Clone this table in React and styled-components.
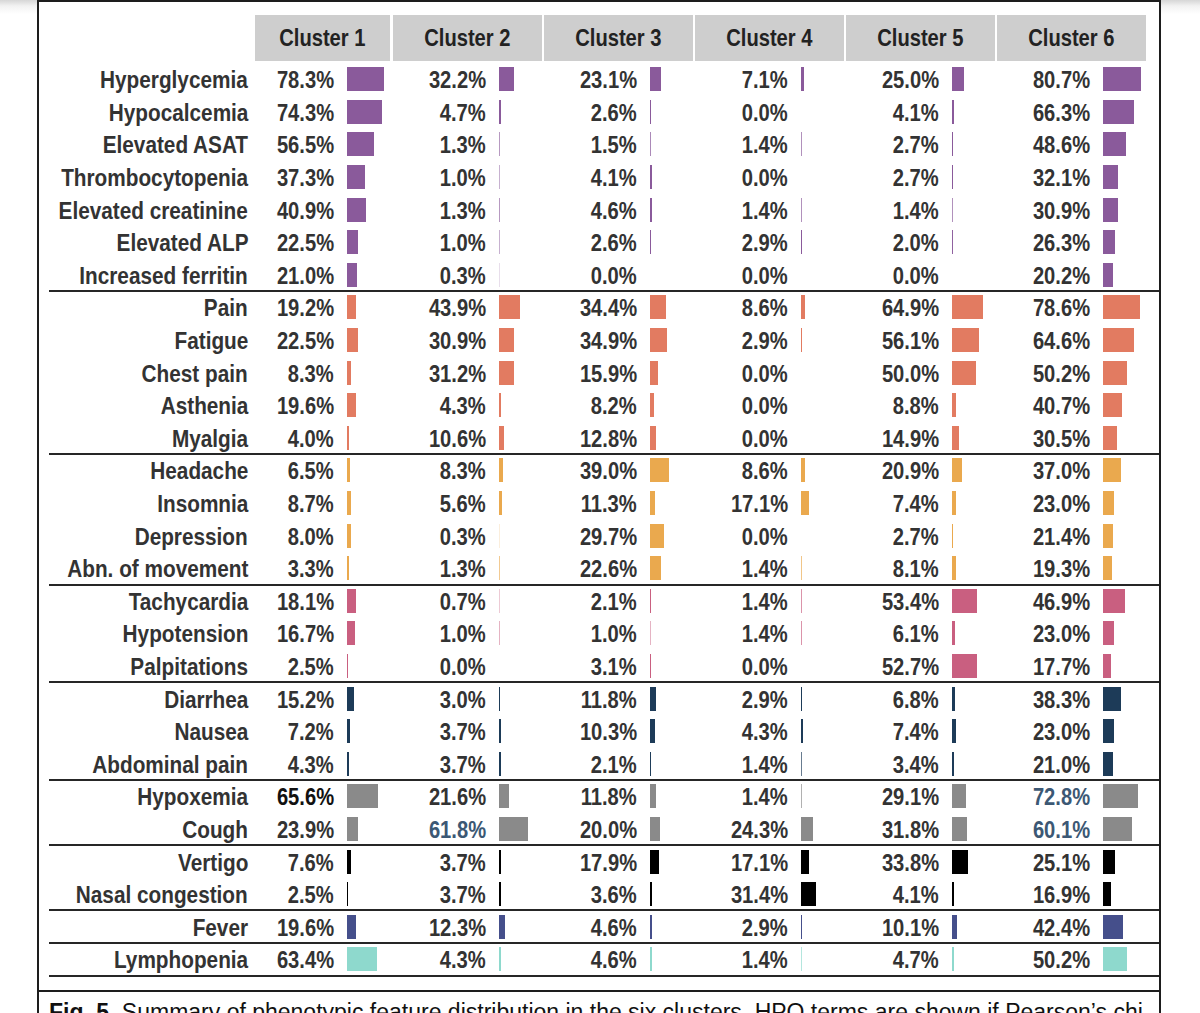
import React from 'react';
import styled, { createGlobalStyle } from 'styled-components';

const Global = createGlobalStyle`
  html, body { margin: 0; padding: 0; overflow: hidden; }
  body {
    height: 1013px;
    background: linear-gradient(to bottom, #d6d6d6 0px, #f2f2f2 6px, #ffffff 14px);
  }
`;

const FONT = `"Liberation Sans", Arial, sans-serif`;
const SCALE = 0.475; // px per percent

const groups = [
  {
    color: '#8a5a9b',
    rows: [
      ['Hyperglycemia', [78.3, 32.2, 23.1, 7.1, 25.0, 80.7]],
      ['Hypocalcemia', [74.3, 4.7, 2.6, 0.0, 4.1, 66.3]],
      ['Elevated ASAT', [56.5, 1.3, 1.5, 1.4, 2.7, 48.6]],
      ['Thrombocytopenia', [37.3, 1.0, 4.1, 0.0, 2.7, 32.1]],
      ['Elevated creatinine', [40.9, 1.3, 4.6, 1.4, 1.4, 30.9]],
      ['Elevated ALP', [22.5, 1.0, 2.6, 2.9, 2.0, 26.3]],
      ['Increased ferritin', [21.0, 0.3, 0.0, 0.0, 0.0, 20.2]],
    ],
  },
  {
    color: '#e27b61',
    rows: [
      ['Pain', [19.2, 43.9, 34.4, 8.6, 64.9, 78.6]],
      ['Fatigue', [22.5, 30.9, 34.9, 2.9, 56.1, 64.6]],
      ['Chest pain', [8.3, 31.2, 15.9, 0.0, 50.0, 50.2]],
      ['Asthenia', [19.6, 4.3, 8.2, 0.0, 8.8, 40.7]],
      ['Myalgia', [4.0, 10.6, 12.8, 0.0, 14.9, 30.5]],
    ],
  },
  {
    color: '#eaa94e',
    rows: [
      ['Headache', [6.5, 8.3, 39.0, 8.6, 20.9, 37.0]],
      ['Insomnia', [8.7, 5.6, 11.3, 17.1, 7.4, 23.0]],
      ['Depression', [8.0, 0.3, 29.7, 0.0, 2.7, 21.4]],
      ['Abn. of movement', [3.3, 1.3, 22.6, 1.4, 8.1, 19.3]],
    ],
  },
  {
    color: '#c95f80',
    rows: [
      ['Tachycardia', [18.1, 0.7, 2.1, 1.4, 53.4, 46.9]],
      ['Hypotension', [16.7, 1.0, 1.0, 1.4, 6.1, 23.0]],
      ['Palpitations', [2.5, 0.0, 3.1, 0.0, 52.7, 17.7]],
    ],
  },
  {
    color: '#1d3b58',
    rows: [
      ['Diarrhea', [15.2, 3.0, 11.8, 2.9, 6.8, 38.3]],
      ['Nausea', [7.2, 3.7, 10.3, 4.3, 7.4, 23.0]],
      ['Abdominal pain', [4.3, 3.7, 2.1, 1.4, 3.4, 21.0]],
    ],
  },
  {
    color: '#8a8a8a',
    rows: [
      ['Hypoxemia', [65.6, 21.6, 11.8, 1.4, 29.1, 72.8], { 0: '#111111', 5: '#3c5874' }],
      ['Cough', [23.9, 61.8, 20.0, 24.3, 31.8, 60.1], { 1: '#3c5874', 5: '#3c5874' }],
    ],
  },
  {
    color: '#000000',
    rows: [
      ['Vertigo', [7.6, 3.7, 17.9, 17.1, 33.8, 25.1]],
      ['Nasal congestion', [2.5, 3.7, 3.6, 31.4, 4.1, 16.9]],
    ],
  },
  {
    color: '#454f8b',
    rows: [['Fever', [19.6, 12.3, 4.6, 2.9, 10.1, 42.4]]],
  },
  {
    color: '#8ed9cd',
    rows: [['Lymphopenia', [63.4, 4.3, 4.6, 1.4, 4.7, 50.2]]],
  },
];

const Page = styled.div`
  margin-left: 37px;
  width: 1124px;
`;

const Frame = styled.div`
  background: #ffffff;
  border-top: 2px solid #1d1d1d;
  border-left: 2px solid #1d1d1d;
  border-right: 2px solid #1d1d1d;
`;

const TableArea = styled.div`
  padding: 13px 0 13px 10px;
  border-bottom: 2px solid #1d1d1d;
`;

const columns = `199px 145px repeat(5, 151px)`;

const HeaderRow = styled.div`
  display: grid;
  grid-template-columns: ${columns};
  height: 46px;
  margin-bottom: 3px;
`;

const HeaderCell = styled.div`
  margin-left: ${(p) => (p.$first ? 7 : 0)}px;
  width: ${(p) => (p.$first ? 135 : 149)}px;
  background: #cecece;
  display: flex;
  align-items: center;
  justify-content: center;
  font-family: ${FONT};
  font-weight: 700;
  font-size: 24px;
  color: #222222;
`;

const Narrow = styled.span`
  display: inline-block;
  flex: none;
  white-space: nowrap;
  transform: scaleX(${(p) => p.$squeeze || 0.84});
  transform-origin: ${(p) => p.$origin || 'right'} center;
`;

const Row = styled.div`
  display: grid;
  grid-template-columns: ${columns};
  height: 32.6px;
  align-items: center;
  box-shadow: ${(p) => (p.$divider ? 'inset 0 -2px 0 #262626' : 'none')};
`;

const Label = styled.div`
  display: flex;
  justify-content: flex-end;
  min-width: 0;
  white-space: nowrap;
  font-family: ${FONT};
  font-weight: 700;
  font-size: 24px;
  line-height: 32px;
  color: #333333;
`;

const Cell = styled.div`
  display: flex;
  align-items: center;
  height: 100%;
`;

const Pct = styled.span`
  display: flex;
  justify-content: flex-end;
  width: ${(p) => (p.$first ? 86 : 93)}px;
  flex: none;
  white-space: nowrap;
  font-family: ${FONT};
  font-weight: 700;
  font-size: 24px;
  line-height: 32px;
  color: ${(p) => p.$color || '#333333'};
`;

const Bar = styled.span`
  display: block;
  flex: none;
  height: 24px;
  margin-left: 13px;
  margin-top: -2px;
  background: ${(p) => p.$color};
`;

const Caption = styled.div`
  padding: 7px 10px 20px 10px;
  font-family: ${FONT};
  font-size: 23px;
  line-height: 1.2;
  color: #111111;
  white-space: nowrap;
  overflow: hidden;
`;

function BarMark({ value, color }) {
  if (value <= 0) return <Bar $color="transparent" style={{ width: 0 }} />;
  const w = value * SCALE;
  const style = w < 1 ? { width: '1px', opacity: Math.max(w, 0.2) } : { width: `${w}px` };
  return <Bar $color={color} style={style} />;
}

export default function App() {
  return (
    <>
      <Global />
      <Page>
        <Frame>
          <TableArea>
            <HeaderRow>
              <div />
              {[1, 2, 3, 4, 5, 6].map((n) => (
                <HeaderCell key={n} $first={n === 1}>
                  <Narrow $origin="center">Cluster {n}</Narrow>
                </HeaderCell>
              ))}
            </HeaderRow>
            {groups.map((g) =>
              g.rows.map(([label, vals, colors], ri) => (
                <Row key={label} $divider={ri === g.rows.length - 1}>
                  <Label>
                    <Narrow $squeeze={0.865}>{label}</Narrow>
                  </Label>
                  {vals.map((v, ci) => (
                    <Cell key={ci}>
                      <Pct $first={ci === 0} $color={colors && colors[ci]}>
                        <Narrow>{v.toFixed(1)}%</Narrow>
                      </Pct>
                      <BarMark value={v} color={g.color} />
                    </Cell>
                  ))}
                </Row>
              ))
            )}
          </TableArea>
          <Caption>
            <b>Fig. 5.</b> Summary of phenotypic feature distribution in the six clusters. HPO terms are shown if
            Pearson’s chi
          </Caption>
        </Frame>
      </Page>
    </>
  );
}
